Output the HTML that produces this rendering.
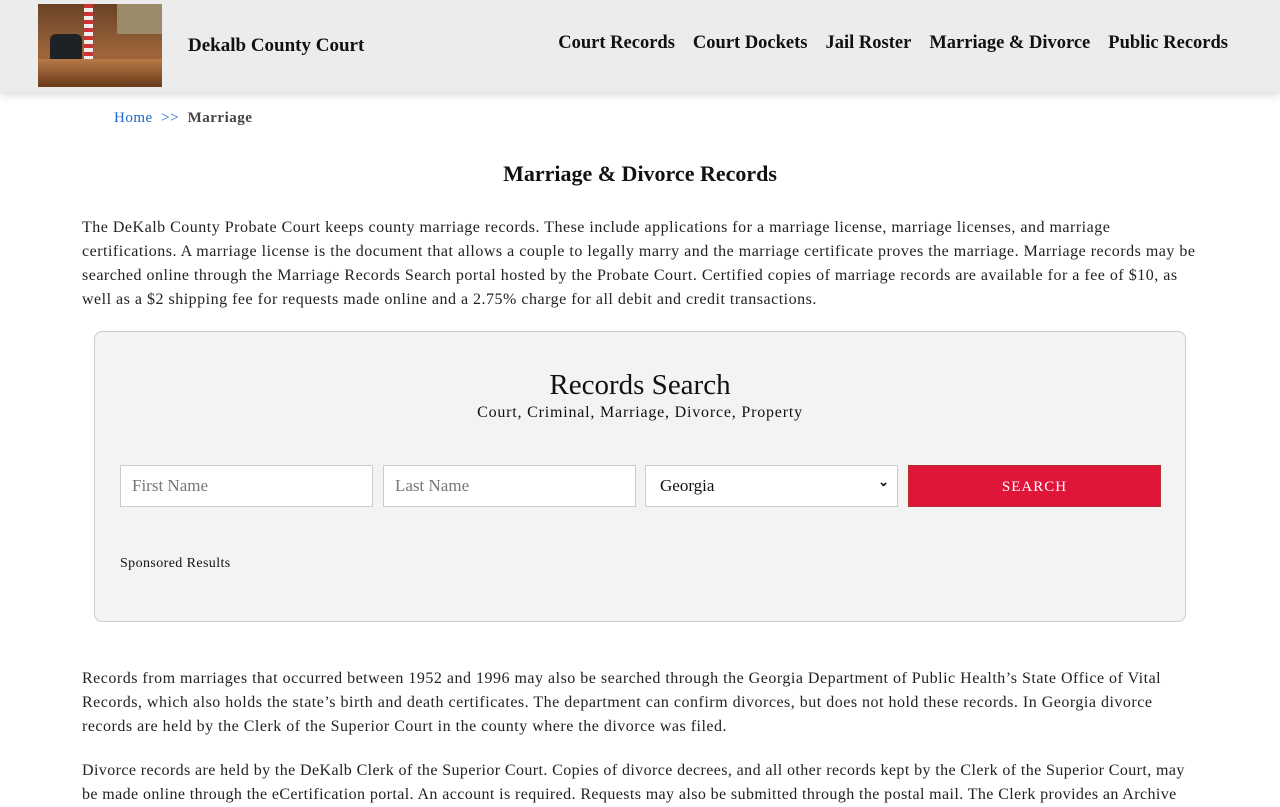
<!DOCTYPE html>
<html><head><meta charset="utf-8">
<style>
*{box-sizing:border-box;margin:0;padding:0}
body{width:1280px;height:800px;overflow:hidden;background:#fff;font-family:"Liberation Serif",serif;color:#111}
.hdr{position:absolute;left:0;top:0;width:1280px;height:92px;background:#ececec;box-shadow:0 3px 8px rgba(0,0,0,.15)}
.logo{position:absolute;left:38px;top:4px;width:124px;height:83px;background:linear-gradient(180deg,#6b4226 0%,#8a5a34 40%,#a0653a 60%,#7a4a28 100%);overflow:hidden}
.logo .wall{position:absolute;right:0;top:0;width:45px;height:30px;background:#9a8a6a}
.logo .flag{position:absolute;left:46px;top:0;width:9px;height:55px;background:repeating-linear-gradient(180deg,#c33 0 4px,#eee 4px 8px)}
.logo .chair{position:absolute;left:12px;top:30px;width:32px;height:30px;background:#1d2226;border-radius:6px}
.logo .desk{position:absolute;left:0;top:55px;width:124px;height:28px;background:linear-gradient(180deg,#b87a48,#6a3a1a)}
.site{position:absolute;left:188px;top:35px;font-size:19px;font-weight:bold}
.nav{position:absolute;right:52px;top:33px;font-size:18.5px;font-weight:bold;display:flex;gap:18px}
.bc{position:absolute;left:114px;top:110px;font-size:15px;letter-spacing:.5px}
.bc a{color:#1a66cc;text-decoration:none}
.bc b{color:#444}
h1{position:absolute;left:0;width:1280px;top:161px;text-align:center;font-size:22px}
p{position:absolute;left:82px;width:1118px;font-size:16px;line-height:24px;color:#222;letter-spacing:.5px}
.box{position:absolute;left:94px;top:331px;width:1092px;height:291px;background:#f3f3f3;border:1px solid #ccc;border-radius:8px}
.box h2{position:absolute;top:37px;width:100%;text-align:center;font-size:29px;font-weight:normal}
.box .sub{position:absolute;top:72px;width:100%;text-align:center;font-size:16px;letter-spacing:.8px}
.in{position:absolute;top:133px;height:42px;width:253px;background:#fff;border:1px solid #ccc;font-size:17px;color:#777;padding:10px 11px}
.btn{position:absolute;top:133px;left:813px;width:253px;height:42px;background:#e0153a;border:1px solid #b5342a;color:#fff;text-align:center;font-size:15px;letter-spacing:1px;padding-top:13px}
.sp{position:absolute;left:25px;top:224px;font-size:14px;letter-spacing:.4px}
</style></head><body>
<div class="hdr">
<div class="logo"><div class="wall"></div><div class="flag"></div><div class="chair"></div><div class="desk"></div></div>
<div class="site">Dekalb County Court</div>
<div class="nav"><span>Court Records</span><span>Court Dockets</span><span>Jail Roster</span><span>Marriage &amp; Divorce</span><span>Public Records</span></div>
</div>
<div class="bc"><a>Home</a> &nbsp;<a>&gt;&gt;</a>&nbsp; <b>Marriage</b></div>
<h1>Marriage &amp; Divorce Records</h1>
<p style="top:216px">The DeKalb County Probate Court keeps county marriage records. These include applications for a marriage license, marriage licenses, and marriage certifications. A marriage license is the document that allows a couple to legally marry and the marriage certificate proves the marriage. Marriage records may be searched online through the Marriage Records Search portal hosted by the Probate Court. Certified copies of marriage records are available for a fee of $10, as well as a $2 shipping fee for requests made online and a 2.75% charge for all debit and credit transactions.</p>
<div class="box">
<h2>Records Search</h2>
<div class="sub">Court, Criminal, Marriage, Divorce, Property</div>
<div class="in" style="left:25px">First Name</div>
<div class="in" style="left:288px">Last Name</div>
<div class="in" style="left:550px;color:#111;padding-left:14px">Georgia<span style="position:absolute;right:8px;top:8px;font-size:13px;font-weight:bold">&#8964;</span></div>
<div class="btn">SEARCH</div>
<div class="sp">Sponsored Results</div>
</div>
<p style="top:667px">Records from marriages that occurred between 1952 and 1996 may also be searched through the Georgia Department of Public Health’s State Office of Vital Records, which also holds the state’s birth and death certificates. The department can confirm divorces, but does not hold these records. In Georgia divorce records are held by the Clerk of the Superior Court in the county where the divorce was filed.</p>
<p style="top:759px;letter-spacing:.4px;width:1110px">Divorce records are held by the DeKalb Clerk of the Superior Court. Copies of divorce decrees, and all other records kept by the Clerk of the Superior Court, may be made online through the eCertification portal. An account is required. Requests may also be submitted through the postal mail. The Clerk provides an Archive</p>
</body></html>
